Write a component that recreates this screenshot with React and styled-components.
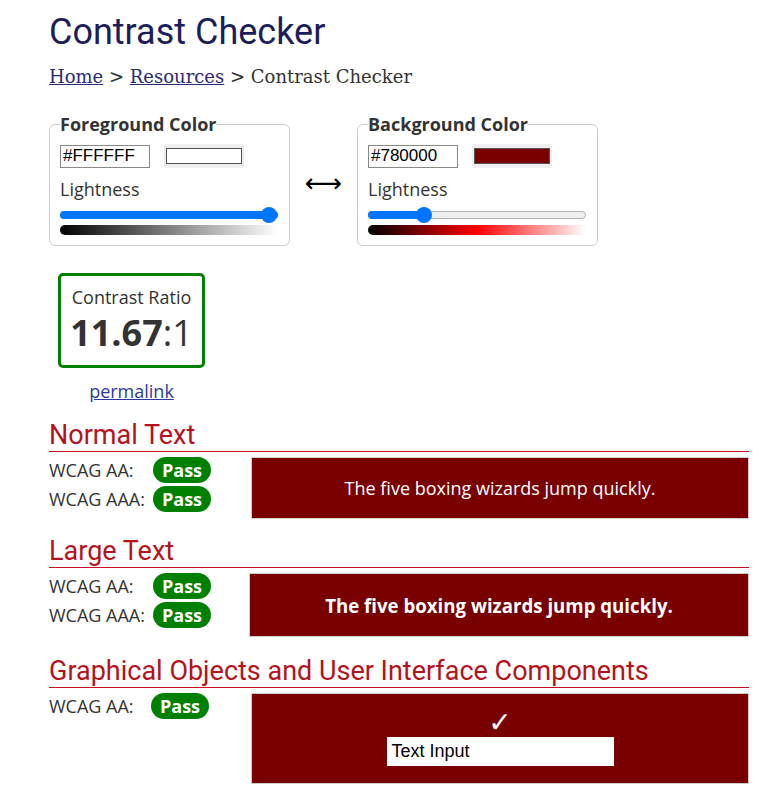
import styled, { createGlobalStyle } from "styled-components"

const GlobalStyle = createGlobalStyle`
body {
  margin: 0;
  background: #fff;
  font-family: "Open Sans", sans-serif;
  font-size: 18px;
  color: #333;
}
`

const Page = styled.main`
width: 700px;
padding: 10px 0 0 49px;
`

const Title = styled.h1`
font-family: Roboto, sans-serif;
font-weight: 400;
font-size: 36px;
line-height: 44px;
color: #1d1d5b;
margin: 0;
`

const Crumbs = styled.nav`
font-family: "DejaVu Serif", serif;
font-size: 18px;
line-height: 24px;
color: #333;
margin: 11px 0 23px;
a {
  color: #2a2a7a;
}
`

const Pickers = styled.div`
display: flex;
align-items: center;
`

const Field = styled.fieldset`
width: 241px;
box-sizing: border-box;
margin: 0;
padding: 0 11px 10px 10px;
border: 1px solid #ccc;
border-radius: 6px;
`

const Legend = styled.legend`
font-weight: 700;
font-size: 18px;
line-height: 24px;
padding: 0;
color: #333;
`

const Swap = styled.span`
width: 67px;
text-align: center;
font-family: "DejaVu Sans", sans-serif;
font-size: 26px;
color: #000;
margin-top: 8px;
`

const ColorRow = styled.div`
display: flex;
align-items: center;
gap: 14px;
margin-top: 8px;
`

const HexInput = styled.input`
width: 90px;
height: 23px;
box-sizing: border-box;
border: 1px solid #888;
font-family: "Liberation Sans", Arial, sans-serif;
font-size: 17px;
padding: 0 2px;
color: #000;
`

const Swatch = styled.div`
width: 80px;
height: 24px;
box-sizing: border-box;
background: #efefef;
padding: 4px 2px;
span {
  display: block;
  height: 100%;
  border: 1px solid #555;
  box-sizing: border-box;
  background: ${p => p.$color};
}
`

const Label = styled.div`
font-size: 18px;
line-height: 24px;
margin-top: 9px;
color: #333;
`

const Track = styled.div`
position: relative;
height: 8px;
margin: 10px 0 0;
border-radius: 4px;
background: #efefef;
border: 1px solid #b2b2b2;
box-sizing: border-box;
`

const Fill = styled.div`
height: 8px;
margin: -1px;
border-radius: 4px;
background: #0075ff;
`

const Thumb = styled.div`
position: absolute;
top: -5px;
width: 16px;
height: 16px;
margin-left: -8px;
border-radius: 50%;
background: #0075ff;
`

const Gradient = styled.div`
height: 10px;
margin-top: 6px;
border-radius: 5px 0 0 5px;
background: ${p => p.$bg};
`

const Ratio = styled.div`
width: 147px;
margin: 27px 0 0 9px;
text-align: center;
`

const RatioBox = styled.div`
box-sizing: border-box;
height: 95px;
border: 3px solid #008000;
border-radius: 5px;
padding-top: 8px;
`

const RatioLabel = styled.div`
font-size: 18px;
line-height: 26px;
`

const RatioValue = styled.div`
font-size: 36px;
line-height: 46px;
b {
  font-weight: 700;
}
`

const Permalink = styled.a`
display: block;
margin-top: 11px;
font-size: 18px;
line-height: 24px;
color: #2a3aa0;
`

const Section = styled.section`
margin-top: ${p => p.$top}px;
`

const Heading = styled.h2`
font-family: Roboto, sans-serif;
font-weight: 400;
font-size: 27px;
line-height: 32px;
color: #b5121b;
margin: 0 0 5px;
border-bottom: 1px solid #c8101e;
`

const Result = styled.div`
display: flex;
align-items: flex-start;
`

const Levels = styled.div`
width: ${p => p.$w}px;
margin-top: -2px;
`

const Level = styled.div`
display: flex;
align-items: center;
height: 29px;
font-size: 18px;
color: #333;
span {
  width: ${p => p.$label}px;
}
`

const Pass = styled.strong`
display: inline-block;
width: 58px;
height: 26px;
line-height: 26px;
border-radius: 13px;
background: #008000;
color: #fff;
text-align: center;
font-size: 18px;
font-weight: 700;
`

const Sample = styled.div`
flex: 1;
height: ${p => p.$h}px;
box-sizing: border-box;
background: #780000;
border: 1px solid #ccc;
color: #fff;
display: flex;
flex-direction: column;
align-items: center;
justify-content: center;
font-size: ${p => (p.$large ? "18.67px" : "18px")};
font-weight: ${p => (p.$large ? 700 : 400)};
`

const Check = styled.div`
font-family: "DejaVu Sans", sans-serif;
font-size: 28px;
line-height: 24px;
`

const TextInput = styled.div`
width: 227px;
height: 29px;
box-sizing: border-box;
margin-top: 2px;
background: #fff;
color: #000;
font-family: "Liberation Sans", Arial, sans-serif;
font-size: 18px;
line-height: 29px;
padding-left: 5px;
`

const Cut = styled.div`
height: 40px;
`

function Picker({ title, hex, color, value, gradient }) {
  return (
    <Field>
      <Legend>{title}</Legend>
      <ColorRow>
        <HexInput defaultValue={hex} />
        <Swatch $color={color}><span /></Swatch>
      </ColorRow>
      <Label>Lightness</Label>
      <Track>
        <Fill style={{ width: `calc(${value}% + 2px)` }} />
        <Thumb style={{ left: `calc(8px + (100% - 16px) * ${value / 100})` }} />
      </Track>
      <Gradient $bg={gradient} />
    </Field>
  )
}

function LevelList({ levels, label = 104, width = 202 }) {
  return (
    <Levels $w={width}>
      {levels.map(l => (
        <Level key={l} $label={label}>
          <span>{l}</span>
          <Pass>Pass</Pass>
        </Level>
      ))}
    </Levels>
  )
}

export default function App() {
  return (
    <Page>
      <GlobalStyle />
      <Title>Contrast Checker</Title>
      <Crumbs>
        <a href="#">Home</a> &gt; <a href="#">Resources</a> &gt; Contrast Checker
      </Crumbs>

      <Pickers>
        <Picker title="Foreground Color" hex="#FFFFFF" color="#fff" value={100}
          gradient="linear-gradient(to right, #000, #fff)" />
        <Swap>⟷</Swap>
        <Picker title="Background Color" hex="#780000" color="#780000" value={23.5}
          gradient="linear-gradient(to right, #000, #f00 50%, #fff)" />
      </Pickers>

      <Ratio>
        <RatioBox>
          <RatioLabel>Contrast Ratio</RatioLabel>
          <RatioValue><b>11.67</b>:1</RatioValue>
        </RatioBox>
        <Permalink href="#">permalink</Permalink>
      </Ratio>

      <Section $top={16}>
        <Heading>Normal Text</Heading>
        <Result>
          <LevelList levels={["WCAG AA:", "WCAG AAA:"]} />
          <Sample $h={62}>The five boxing wizards jump quickly.</Sample>
        </Result>
      </Section>

      <Section $top={16}>
        <Heading>Large Text</Heading>
        <Result>
          <LevelList levels={["WCAG AA:", "WCAG AAA:"]} width={200} />
          <Sample $h={64} $large>The five boxing wizards jump quickly.</Sample>
        </Result>
      </Section>

      <Section $top={18}>
        <Heading>Graphical Objects and User Interface Components</Heading>
        <Result>
          <LevelList levels={["WCAG AA:"]} label={102} />
          <Sample $h={91}>
            <Check>✓</Check>
            <TextInput>Text Input</TextInput>
          </Sample>
        </Result>
      </Section>
      <Cut />
    </Page>
  )
}
